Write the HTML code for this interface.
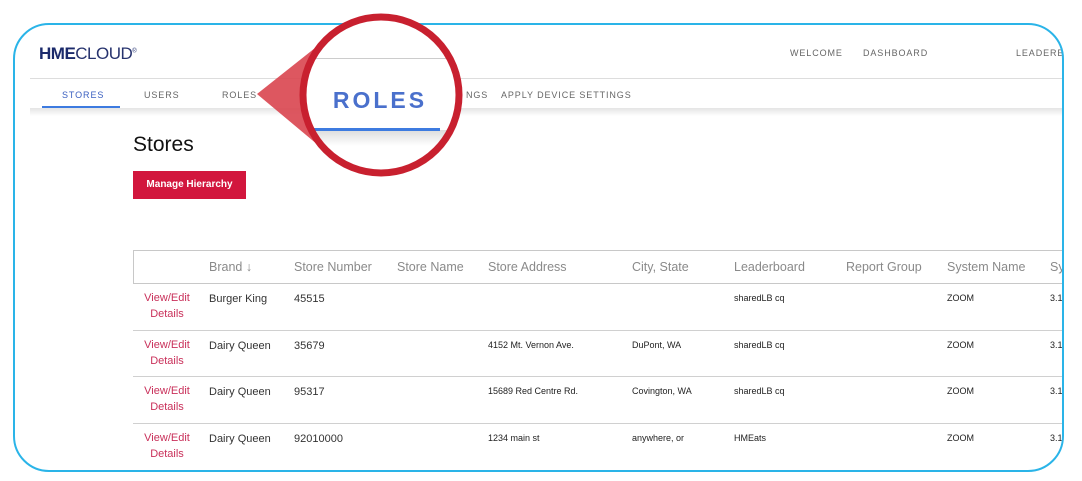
<!DOCTYPE html>
<html><head><style>
body{margin:0;width:1082px;height:481px;background:#fff;position:relative;overflow:hidden;font-family:"Liberation Sans",sans-serif}
.frame{position:absolute;left:13px;top:23px;width:1047px;height:445px;border:2px solid #2ab4e8;border-radius:36px;overflow:hidden;background:#fff}
.in{position:absolute;left:-2px;top:-2px;width:1060px;height:460px}
.abs{position:absolute;white-space:nowrap}
.nav{font-size:9px;letter-spacing:0.9px;color:#666}
.th{font-size:12.5px;color:#8a8a8a}
.td{font-size:11px;color:#333}
.sm{font-size:9px;color:#222}
.link{font-size:11px;color:#c9305a;text-align:center;width:60px;line-height:16px}
</style></head><body>
<div class="frame"><div class="in">
 <div class="abs" style="left:26px;top:21px;font-size:17px;color:#1b2a6b;letter-spacing:-0.5px"><b style="font-weight:900">HME</b><span style="font-weight:300;color:#27336e">CLOUD</span><sup style="font-size:6px">®</sup></div>
 <div class="abs nav" style="left:777px;top:25px">WELCOME</div>
 <div class="abs nav" style="left:850px;top:25px">DASHBOARD</div>
 <div class="abs nav" style="left:1003px;top:25px">LEADERB</div>
 <div class="abs" style="left:17px;top:55px;width:1045px;height:1px;background:#ddd"></div>
 <div class="abs" style="left:17px;top:85px;width:1045px;height:8px;background:linear-gradient(#e4e4e4,#fff)"></div>
 <div class="abs nav" style="left:49px;top:67px;color:#3a5fc0">STORES</div>
 <div class="abs" style="left:29px;top:83px;width:78px;height:2px;background:#3d7be0"></div>
 <div class="abs nav" style="left:131px;top:67px">USERS</div>
 <div class="abs nav" style="left:209px;top:67px">ROLES</div>
 <div class="abs nav" style="left:453px;top:67px">NGS</div>
 <div class="abs nav" style="left:488px;top:67px">APPLY DEVICE SETTINGS</div>
 <div class="abs" style="left:120px;top:110px;font-size:21px;color:#111">Stores</div>
 <div class="abs" style="left:120px;top:148px;width:113px;height:28px;background:#d2163d;color:#fff;font-size:10px;font-weight:bold;line-height:28px;text-align:center">Manage Hierarchy</div>
 <div class="abs" style="left:120px;top:227px;width:940px;height:32px;border:1px solid #c8c8c8;border-right:none"></div>
 <div class="abs th" style="left:196px;top:237px">Brand ↓</div>
 <div class="abs th" style="left:281px;top:237px">Store Number</div>
 <div class="abs th" style="left:384px;top:237px">Store Name</div>
 <div class="abs th" style="left:475px;top:237px">Store Address</div>
 <div class="abs th" style="left:619px;top:237px">City, State</div>
 <div class="abs th" style="left:721px;top:237px">Leaderboard</div>
 <div class="abs th" style="left:833px;top:237px">Report Group</div>
 <div class="abs th" style="left:934px;top:237px">System Name</div>
 <div class="abs th" style="left:1037px;top:237px">Sy</div>

 <div class="abs link" style="left:124px;top:267px">View/Edit<br>Details</div>
 <div class="abs td" style="left:196px;top:270px">Burger King</div>
 <div class="abs td" style="left:281px;top:270px">45515</div>
 <div class="abs sm" style="left:721px;top:270px">sharedLB cq</div>
 <div class="abs sm" style="left:934px;top:270px">ZOOM</div>
 <div class="abs sm" style="left:1037px;top:270px">3.1</div>
 <div class="abs" style="left:120px;top:307px;width:940px;height:1px;background:#d0d0d0"></div>

 <div class="abs link" style="left:124px;top:314px">View/Edit<br>Details</div>
 <div class="abs td" style="left:196px;top:317px">Dairy Queen</div>
 <div class="abs td" style="left:281px;top:317px">35679</div>
 <div class="abs sm" style="left:475px;top:317px">4152 Mt. Vernon Ave.</div>
 <div class="abs sm" style="left:619px;top:317px">DuPont, WA</div>
 <div class="abs sm" style="left:721px;top:317px">sharedLB cq</div>
 <div class="abs sm" style="left:934px;top:317px">ZOOM</div>
 <div class="abs sm" style="left:1037px;top:317px">3.1</div>
 <div class="abs" style="left:120px;top:353px;width:940px;height:1px;background:#d0d0d0"></div>

 <div class="abs link" style="left:124px;top:360px">View/Edit<br>Details</div>
 <div class="abs td" style="left:196px;top:363px">Dairy Queen</div>
 <div class="abs td" style="left:281px;top:363px">95317</div>
 <div class="abs sm" style="left:475px;top:363px">15689 Red Centre Rd.</div>
 <div class="abs sm" style="left:619px;top:363px">Covington, WA</div>
 <div class="abs sm" style="left:721px;top:363px">sharedLB cq</div>
 <div class="abs sm" style="left:934px;top:363px">ZOOM</div>
 <div class="abs sm" style="left:1037px;top:363px">3.1</div>
 <div class="abs" style="left:120px;top:400px;width:940px;height:1px;background:#d0d0d0"></div>

 <div class="abs link" style="left:124px;top:407px">View/Edit<br>Details</div>
 <div class="abs td" style="left:196px;top:410px">Dairy Queen</div>
 <div class="abs td" style="left:281px;top:410px">92010000</div>
 <div class="abs sm" style="left:475px;top:410px">1234 main st</div>
 <div class="abs sm" style="left:619px;top:410px">anywhere, or</div>
 <div class="abs sm" style="left:721px;top:410px">HMEats</div>
 <div class="abs sm" style="left:934px;top:410px">ZOOM</div>
 <div class="abs sm" style="left:1037px;top:410px">3.1</div>
</div></div>
<svg class="abs" style="left:0;top:0" width="1082" height="481">
 <defs><clipPath id="c"><circle cx="381" cy="95" r="78"/></clipPath>
 <linearGradient id="sh" x1="0" y1="0" x2="0" y2="1"><stop offset="0" stop-color="#ddd"/><stop offset="1" stop-color="#fff"/></linearGradient></defs>
 <polygon points="257,94 315,48 318,145" fill="#d9454f" opacity="0.9"/>
 <g clip-path="url(#c)">
  <rect x="290" y="0" width="180" height="200" fill="#fff"/>
  <rect x="290" y="58" width="180" height="1" fill="#ccc"/>
  <rect x="290" y="130" width="180" height="16" fill="url(#sh)"/>
  <rect x="300" y="128" width="140" height="3" fill="#3d7be0"/>
  <text x="380" y="108" text-anchor="middle" font-family="Liberation Sans" font-size="23" font-weight="bold" letter-spacing="3" fill="#4a70cc">ROLES</text>
 </g>
 <circle cx="381" cy="95" r="78" fill="none" stroke="#c8202f" stroke-width="7"/>
</svg>
</body></html>
